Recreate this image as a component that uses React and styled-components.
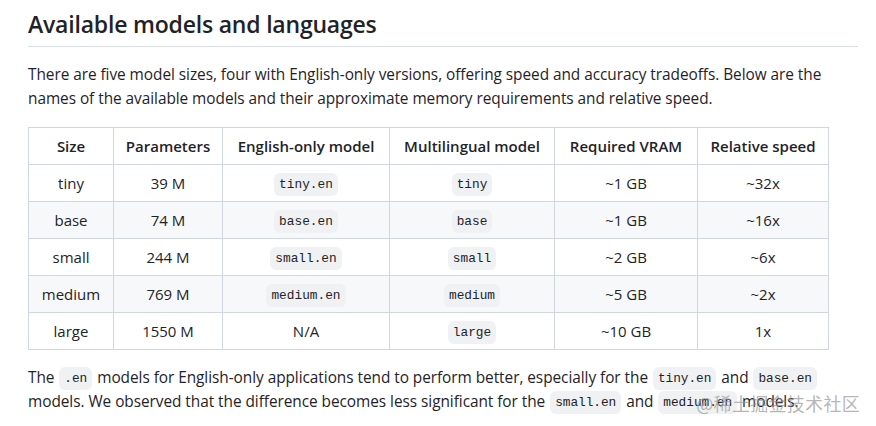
import React from "react";
import styled, { createGlobalStyle } from "styled-components";

const GlobalStyle = createGlobalStyle`
  body {
    margin: 0;
    background: #ffffff;
    font-family: "Open Sans", "Noto Sans", sans-serif;
    color: #1f2328;
  }
`;

const Page = styled.div`
  position: relative;
  width: 830px;
  padding: 9px 0 0 28px;
  height: 417px;
`;

const Heading = styled.h2`
  margin: 0 0 16px;
  padding-bottom: 7px;
  font-size: 23px;
  font-weight: 600;
  line-height: 30px;
  border-bottom: 1px solid #d8dee4;
  letter-spacing: -0.2px;
`;

const Paragraph = styled.p`
  margin: 0 0 16px;
  font-size: 15.4px;
  line-height: 24px;
  letter-spacing: -0.05px;
`;

const Table = styled.table`
  border-collapse: collapse;
  table-layout: fixed;
  width: 800px;
  margin-bottom: 16px;
  font-size: 15px;
`;

const Row = styled.tr`
  background: ${(p) => (p.$striped ? "#f6f8fa" : "#ffffff")};
`;

const HeadCell = styled.th`
  box-sizing: border-box;
  width: ${(p) => p.$width}px;
  height: 37px;
  border: 1px solid #d0d7de;
  padding: 0 4px;
  line-height: 24px;
  font-weight: 600;
  text-align: center;
`;

const Cell = styled.td`
  box-sizing: border-box;
  height: 37px;
  border: 1px solid #d0d7de;
  padding: 0 4px;
  line-height: 24px;
  text-align: center;
`;

const Code = styled.code`
  font-family: "Liberation Mono", "DejaVu Sans Mono", monospace;
  font-size: 12.8px;
  line-height: 1;
  padding: 4px 5px;
  margin: 0 1px;
  background: #eff1f3;
  border-radius: 6px;
  vertical-align: 1px;
`;

const Watermark = styled.div`
  position: absolute;
  right: -2px;
  bottom: 10px;
  font-family: "Noto Sans CJK SC", sans-serif;
  font-size: 18px;
  color: rgba(150, 150, 150, 0.7);
  letter-spacing: 0.3px;
`;

const columns = [
  ["Size", 85],
  ["Parameters", 109],
  ["English-only model", 167],
  ["Multilingual model", 165],
  ["Required VRAM", 143],
  ["Relative speed", 131],
];

const models = [
  ["tiny", "39 M", "tiny.en", "tiny", "~1 GB", "~32x"],
  ["base", "74 M", "base.en", "base", "~1 GB", "~16x"],
  ["small", "244 M", "small.en", "small", "~2 GB", "~6x"],
  ["medium", "769 M", "medium.en", "medium", "~5 GB", "~2x"],
  ["large", "1550 M", null, "large", "~10 GB", "1x"],
];

export default function App() {
  return (
    <>
      <GlobalStyle />
      <Page>
        <Heading>Available models and languages</Heading>
        <Paragraph>
          There are five model sizes, four with English-only versions, offering speed and
          accuracy tradeoffs. Below are the names of the available models and their
          approximate memory requirements and relative speed.
        </Paragraph>
        <Table>
          <thead>
            <Row>
              {columns.map(([label, width]) => (
                <HeadCell key={label} $width={width}>
                  {label}
                </HeadCell>
              ))}
            </Row>
          </thead>
          <tbody>
            {models.map((m, i) => (
              <Row key={m[0]} $striped={i % 2 === 1}>
                <Cell>{m[0]}</Cell>
                <Cell>{m[1]}</Cell>
                <Cell>{m[2] ? <Code>{m[2]}</Code> : "N/A"}</Cell>
                <Cell>
                  <Code>{m[3]}</Code>
                </Cell>
                <Cell>{m[4]}</Cell>
                <Cell>{m[5]}</Cell>
              </Row>
            ))}
          </tbody>
        </Table>
        <Paragraph>
          The <Code>.en</Code> models for English-only applications tend to perform better,
          especially for the <Code>tiny.en</Code> and <Code>base.en</Code> models. We observed
          that the difference becomes less significant for the <Code>small.en</Code> and{" "}
          <Code>medium.en</Code> models.
        </Paragraph>
        <Watermark>@稀土掘金技术社区</Watermark>
      </Page>
    </>
  );
}
